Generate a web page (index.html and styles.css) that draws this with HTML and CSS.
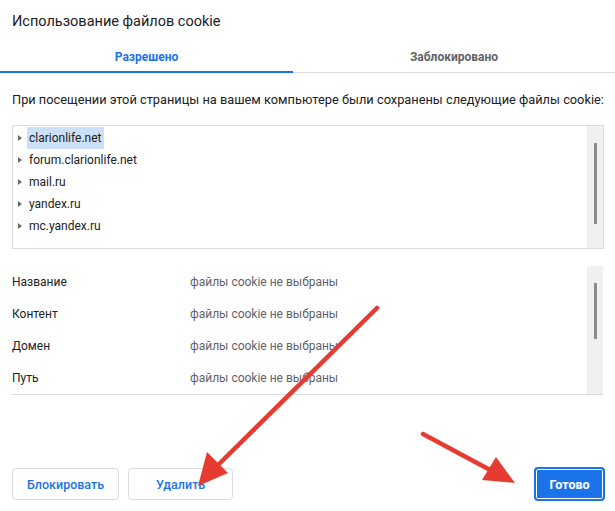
FILE: index.html
```html
<!DOCTYPE html>
<html lang="ru">
<head>
  <meta charset="UTF-8">
  <meta name="viewport" content="width=device-width, initial-scale=1.0">
  <title>Использование файлов cookie</title>
  <link rel="stylesheet" href="styles.css">
</head>
<body>
  <div class="dialog">
    <h1 class="dialog-title">Использование файлов cookie</h1>

    <div class="tabs">
      <div class="tab active">Разрешено</div>
      <div class="tab">Заблокировано</div>
    </div>

    <p class="intro">При посещении этой страницы на вашем компьютере были сохранены следующие файлы cookie:</p>

    <div class="site-list">
      <ul class="sites">
        <li class="site"><span class="expander"></span><span class="site-name selected">clarionlife.net</span></li>
        <li class="site"><span class="expander"></span><span class="site-name">forum.clarionlife.net</span></li>
        <li class="site"><span class="expander"></span><span class="site-name">mail.ru</span></li>
        <li class="site"><span class="expander"></span><span class="site-name">yandex.ru</span></li>
        <li class="site"><span class="expander"></span><span class="site-name">mc.yandex.ru</span></li>
      </ul>
      <div class="scrollbar scrollbar-sites"><div class="thumb"></div></div>
    </div>

    <div class="details">
      <div class="fields">
        <div class="field">
          <span class="field-label">Название</span>
          <span class="field-value">файлы cookie не выбраны</span>
        </div>
        <div class="field">
          <span class="field-label">Контент</span>
          <span class="field-value">файлы cookie не выбраны</span>
        </div>
        <div class="field">
          <span class="field-label">Домен</span>
          <span class="field-value">файлы cookie не выбраны</span>
        </div>
        <div class="field">
          <span class="field-label">Путь</span>
          <span class="field-value">файлы cookie не выбраны</span>
        </div>
      </div>
      <div class="scrollbar scrollbar-details"><div class="thumb"></div></div>
    </div>

    <div class="actions">
      <button class="btn">Блокировать</button>
      <button class="btn">Удалить</button>
      <button class="btn btn-primary">Готово</button>
    </div>
  </div>

  <!-- стрелки-пометки поверх диалога -->
  <svg class="marks" width="615" height="511" viewBox="0 0 615 511">
    <g fill="#e53b30" stroke="#e53b30">
      <line x1="377" y1="308" x2="216" y2="467" stroke-width="4.5" stroke-linecap="round"/>
      <polygon points="198,486 207,452 228,473" stroke="none"/>
      <line x1="423" y1="434" x2="492" y2="471" stroke-width="4.5" stroke-linecap="round"/>
      <polygon points="515,483 482,480 496,457" stroke="none"/>
    </g>
  </svg>
</body>
</html>
```

FILE: styles.css
```css
* {
  margin: 0;
  padding: 0;
  box-sizing: border-box;
}

body {
  font-family: Roboto, "Noto Sans", "Liberation Sans", sans-serif;
  background: #fff;
  color: #202124;
  width: 615px;
  height: 511px;
  overflow: hidden;
  position: relative;
}

.dialog {
  display: flex;
  flex-direction: column;
}

.dialog-title {
  font-size: 14.5px;
  font-weight: 400;
  line-height: 20px;
  padding: 12px 12px 0;
  margin-bottom: 10px;
}

.tabs {
  display: grid;
  grid-template-columns: 293px 1fr;
  box-shadow: inset 0 -1px 0 #dadce0;
}

.tab {
  text-align: center;
  font-size: 12px;
  font-weight: 700;
  line-height: 16px;
  color: #5f6368;
  padding: 7px 0 6px;
  border-bottom: 2px solid transparent;
}

.tab.active {
  color: #1a73e8;
  border-bottom-color: #1a73e8;
}

.intro {
  font-size: 12.8px;
  line-height: 18px;
  padding: 0 12px;
  margin: 18px 0 16px;
  white-space: nowrap;
}

.site-list {
  display: flex;
  margin: 0 11px 0 12px;
  height: 124px;
  border: 1px solid #dadce0;
}

.sites {
  flex: 1;
  list-style: none;
}

.site {
  display: flex;
  align-items: center;
  height: 22px;
  font-size: 12px;
  padding-top: 1px;
}

.expander {
  width: 0;
  height: 0;
  margin-left: 5px;
  border-left: 4px solid #6b6b6b;
  border-top: 3.5px solid transparent;
  border-bottom: 3.5px solid transparent;
}

.site-name {
  margin-left: 5px;
  padding: 0 2px;
  line-height: 22px;
}

.site-name.selected {
  background: #cce1f7;
}

.scrollbar {
  width: 16px;
  background: #f0f0f0;
  display: flex;
  justify-content: center;
}

.thumb {
  width: 3px;
  background: #8b8b8b;
}

.scrollbar-sites .thumb {
  margin-top: 17px;
  height: 81px;
}

.scrollbar-details .thumb {
  margin-top: 17px;
  height: 56px;
}

.details {
  display: flex;
  margin: 17px 12px 0;
  height: 129px;
  border-bottom: 1px solid #dadce0;
}

.fields {
  flex: 1;
}

.field {
  display: grid;
  grid-template-columns: 178px 1fr;
  align-items: center;
  height: 32px;
  font-size: 12px;
}

.field-value {
  color: #5f6368;
}

.actions {
  display: flex;
  align-items: center;
  gap: 9px;
  padding: 0 10px 0 12px;
  margin-top: 72px;
}

.btn {
  font-family: inherit;
  font-size: 12.5px;
  font-weight: 500;
  color: #1a73e8;
  background: #fff;
  border: 1px solid #dadce0;
  border-radius: 4px;
  height: 32px;
  min-width: 105px;
  padding: 0 14px;
}

.btn-primary {
  margin-left: auto;
  min-width: 0;
  height: 34px;
  width: 71px;
  padding: 0;
  color: #fff;
  font-weight: 700;
  background: #1a73e8;
  border: 2px solid #1a73e8;
  box-shadow: inset 0 0 0 1px #fff;
}

.marks {
  position: absolute;
  left: 0;
  top: 0;
  pointer-events: none;
}
```
